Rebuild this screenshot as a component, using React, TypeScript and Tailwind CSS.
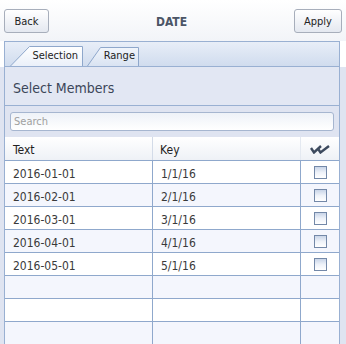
import React from "react";

const rows = [
  ["2016-01-01", "1/1/16"],
  ["2016-02-01", "2/1/16"],
  ["2016-03-01", "3/1/16"],
  ["2016-04-01", "4/1/16"],
  ["2016-05-01", "5/1/16"],
  null,
  null,
  null,
];

function Checkbox() {
  return (
    <div className="w-[13px] h-[13px] border border-[#7388a8] bg-gradient-to-b from-[#c9d5e8] via-[#eef2f9] to-white" />
  );
}

export default function App() {
  return (
    <div
      className="w-[346px] h-[344px] overflow-hidden bg-white text-[12px] text-[#333]"
      style={{ fontFamily: '"DejaVu Sans Condensed", Tahoma, "Liberation Sans", sans-serif' }}
    >
      {/* Top bar */}
      <div className="h-[41px] flex items-center justify-between px-[4px] pt-[1px] bg-gradient-to-b from-white to-[#f2f4f8]">
        <button className="w-[45px] h-[24px] pt-[2px] rounded-[3px] border border-[#a7aebb] bg-gradient-to-b from-white to-[#e4e8f0] text-[11px] text-[#222]">
          Back
        </button>
        <div className="font-bold text-[12px] text-[#4b5566] pt-[1px]">DATE</div>
        <button className="w-[48px] h-[24px] pt-[2px] rounded-[3px] border border-[#a7aebb] bg-gradient-to-b from-white to-[#e4e8f0] text-[11px] text-[#222]">
          Apply
        </button>
      </div>

      {/* Tab strip */}
      <div className="pl-[4px]">
        <div className="w-[336px] h-[26px] border border-[#99b0d2] bg-gradient-to-b from-[#e8eef8] to-[#d0dcee] flex items-end pl-[5px] gap-[4px]">
          <div className="relative w-[73px] h-[20px] flex items-center justify-end pr-[5px] pt-[1px]">
            <svg className="absolute inset-0" width="73" height="20" viewBox="0 0 73 20">
              <defs>
                <linearGradient id="ta" x1="0" y1="0" x2="0" y2="1">
                  <stop offset="0" stopColor="#ffffff" />
                  <stop offset="1" stopColor="#eaf0f9" />
                </linearGradient>
              </defs>
              <path d="M0.5 20 L19.5 0.5 L72.5 0.5 L72.5 20" fill="url(#ta)" stroke="#8ea7cb" />
            </svg>
            <span className="relative text-[11px] text-[#222]">Selection</span>
          </div>
          <div className="relative w-[52px] h-[19px] flex items-center justify-end pr-[4px]">
            <svg className="absolute inset-0" width="52" height="19" viewBox="0 0 52 19">
              <defs>
                <linearGradient id="tb" x1="0" y1="0" x2="0" y2="1">
                  <stop offset="0" stopColor="#f1f5fb" />
                  <stop offset="1" stopColor="#d9e3f2" />
                </linearGradient>
              </defs>
              <path d="M0.5 19 L13.5 0.5 L51.5 0.5 L51.5 19" fill="url(#tb)" stroke="#8ea7cb" />
            </svg>
            <span className="relative text-[11px] text-[#222]">Range</span>
          </div>
        </div>
      </div>

      {/* Body */}
      <div className="bg-[#dfe4f1] h-[278px] pl-[4px]">
        <div className="w-[336px] h-full border-x border-[#99b0d2] flex flex-col">
          <div className="h-[40px] border-b border-[#99b0d2] flex items-center pl-[8px] pt-[6px] text-[14px] text-[#3b4658] bg-[#e2e7f3]">
            Select Members
          </div>
          <div className="h-[32px] pt-[6px] pl-[5px]">
            <div className="w-[324px] h-[19px] rounded-[3px] border border-[#a6b6d0] bg-gradient-to-b from-[#eef2f8] to-white flex items-center pl-[3px] pt-[1px] text-[11px] text-[#a0a0a0]">
              Search
            </div>
          </div>
          <div className="bg-white flex-1">
            {/* Header */}
            <div className="h-[24px] flex border-b border-[#8fa8cc] bg-gradient-to-b from-white to-[#eef1f6]">
              <div className="w-[148px] border-r border-[#d3dbe8] flex items-center pl-[8px] pt-[2px] text-[#222]">Text</div>
              <div className="w-[148px] border-r border-[#e4e9f1] flex items-center pl-[7px] pt-[2px] text-[#222]">Key</div>
              <div className="flex-1 flex items-center justify-center pt-[1px]">
                <svg width="20" height="9" viewBox="0 0 20 9">
                  <path d="M1 3 L4 7.5 L11 1" fill="none" stroke="#3d4a5e" strokeWidth="2.4" strokeLinejoin="miter" />
                  <path d="M8.5 4.5 L10.5 7.5 L19 1" fill="none" stroke="#3d4a5e" strokeWidth="2.4" strokeLinejoin="miter" />
                </svg>
              </div>
            </div>
            {rows.map((r, i) => (
              <div
                key={i}
                className={`h-[23px] flex border-b border-[#8fa8cc] ${i % 2 === 0 ? "bg-white" : "bg-[#f4f6fd]"}`}
              >
                <div className="w-[148px] border-r border-[#8fa8cc] flex items-center pl-[8px] pt-[3px] text-[#3a3a3a]">
                  {r ? r[0] : ""}
                </div>
                <div className="w-[148px] border-r border-[#8fa8cc] flex items-center pl-[8px] pt-[3px] text-[#3a3a3a]">
                  {r ? r[1] : ""}
                </div>
                <div className="flex-1 flex items-center justify-center">{r ? <Checkbox /> : null}</div>
              </div>
            ))}
          </div>
        </div>
      </div>
    </div>
  );
}
